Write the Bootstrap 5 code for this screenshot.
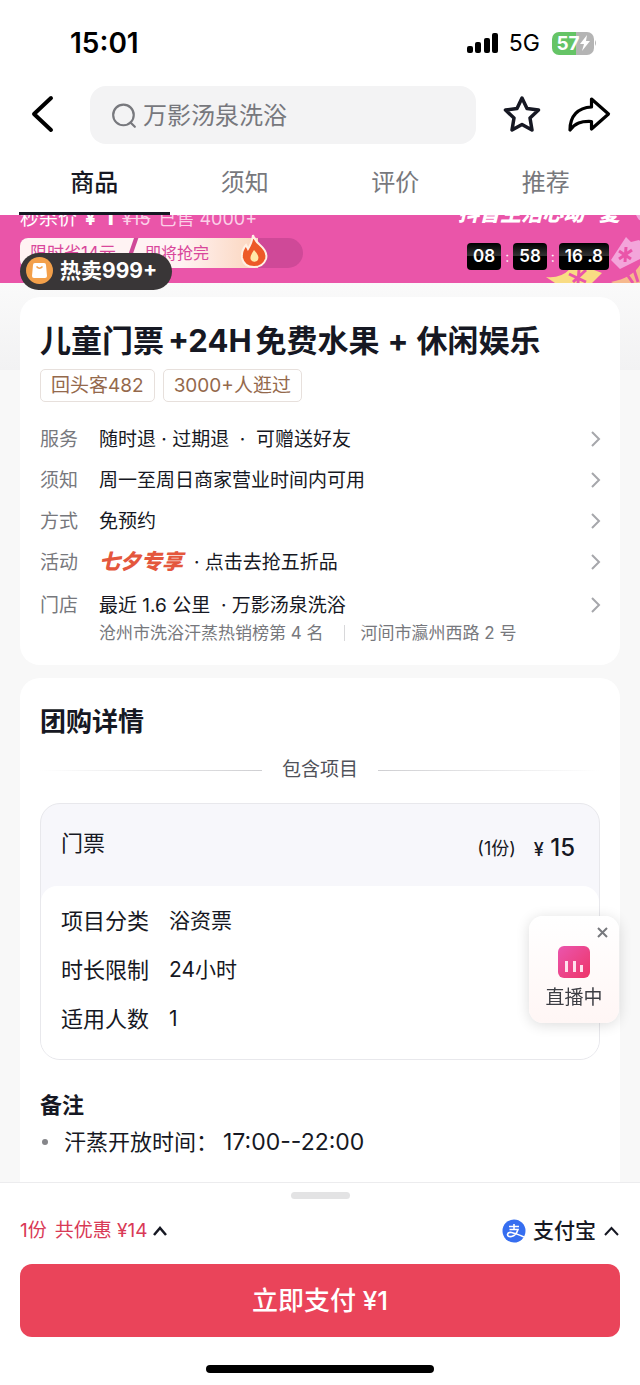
<!DOCTYPE html>
<html lang="zh-CN">
<head>
<meta charset="utf-8">
<meta name="viewport" content="width=device-width, initial-scale=1">
<title>儿童门票+24H免费水果+休闲娱乐</title>
<link href="https://cdn.jsdelivr.net/npm/bootstrap@5.3.0/dist/css/bootstrap.min.css" rel="stylesheet">
<script src="https://cdn.jsdelivr.net/npm/bootstrap@5.3.0/dist/js/bootstrap.bundle.min.js" defer></script>
<style>
  body { font-family: Inter, "Noto Sans CJK SC", sans-serif; font-size: 19px; line-height: 30px; color: #161823; background: #f8f8f8; }
  svg { display: block; flex: none; }
  a { color: inherit; text-decoration: none; }
  .page-head { z-index: 10; }
  .status { height: 86px; padding: 0 43px 0 70px; color: #000; }
  .clock { font-size: 28px; font-weight: 600; }
  .network { margin: 0 12px 0 10px; font-size: 23px; }
  .battery { width: 42px; height: 23px; border-radius: 7px; background: linear-gradient(90deg, #65c466 57%, #b4b4b4 57%); color: #fff; font-size: 19px; font-weight: 700; line-height: 23px; }
  .tools { padding: 0 29px; }
  .plain { border: 0; padding: 0; background: none; color: inherit; }
  .search { height: 58px; margin: 0 27px 0 32px; padding: 2px 21px 0; gap: 6px; border-radius: 16px; background: #f3f3f4; color: #77787d; }
  .search input { width: 100%; min-width: 0; border: 0; outline: 0; padding: 0; background: none; font-size: 24px; color: inherit; }
  .search input::placeholder { color: #77787d; opacity: 1; }
  .tabs { padding: 0 19px; font-size: 24px; color: #77787d; }
  .tabs a { height: 71px; line-height: 78px; border-bottom: 3px solid transparent; }
  .tabs a.active { color: #161823; font-weight: 500; border-color: #161823; }
  .promo { height: 68px; padding: 0 20px; background: #ea55a9; color: #fff; }
  .promo-inner { margin-top: -11px; }
  .price { gap: 8px; line-height: 26px; white-space: nowrap; }
  .price .old { font-size: 18px; color: #fbd0e8; }
  .price .now { font-size: 24px; line-height: 26px; }
  .saving { width: 283px; height: 30px; margin-top: 6px; border-radius: 8px 15px 15px 8px; background: #cf4998; color: #d9479b; font-size: 17px; line-height: 30px; }
  .saving-a { width: 114px; padding-left: 10px; border-radius: 8px 0 0 8px; background: #fff3f3; clip-path: polygon(0 0, 100% 0, 91% 100%, 0 100%); }
  .saving-b { width: 130px; margin-left: -6px; padding-left: 17px; background: linear-gradient(90deg, #fff3f3 40%, #fbd5bd); clip-path: polygon(8% 0, 100% 0, 100% 100%, 0 100%); font-size: 16px; }
  .flame { left: 219px; top: -5px; }
  .slogan { gap: 15px; font-size: 21px; font-weight: 900; font-style: italic; line-height: 20px; }
  .timer { margin-top: 19px; margin-right: 11px; gap: 4px; font-size: 17px; line-height: 27px; }
  .timer b { min-width: 33px; padding: 0 6px; border-radius: 4px; background: linear-gradient(#000, #333 48%, #000 50%); font-weight: 600; text-align: center; white-space: pre; }
  .timer span { width: 4px; font-size: 14px; }
  .coupons { right: 0; bottom: 0; }
  .hot { left: 20px; top: 38px; height: 37px; padding: 0 15px 2px 6px; gap: 7px; border-radius: 19px; background: #393637; color: #fff; font-weight: 700; font-size: 21px; z-index: 5; }
  .content { padding: 14px 20px 0; gap: 13px; background: linear-gradient(#fafafa, #f2f2f3 87px, #f8f8f8 87px); }
  .panel { padding: 24px 20px 20px; border-radius: 20px; background: #fff; }
  .deal-title { margin: 0; font-size: 31px; font-weight: 700; line-height: 40px; }
  .chip { padding: 0 10px; border: 1px solid #e7e0dc; border-radius: 5px; color: #94694c; line-height: 31px; }
  .facts { margin-top: 17px; }
  .facts a { margin-right: -3px; padding: 6px 0 5px; }
  .facts a:last-child { padding: 8px 0 0; }
  .fact-name { width: 59px; flex: none; color: #77787d; }
  .where { font-size: 17px; line-height: 24px; color: #77787d; }
  .where i { width: 1px; height: 16px; margin: 0 16px 0 20px; background: #d8d8da; }
  .gala { margin-right: 11px; color: #e4573d; font-size: 21px; font-weight: 900; font-style: italic; line-height: 28px; }
  .sec-title { margin: 0; font-size: 26px; font-weight: 600; line-height: 40px; }
  .divider { margin: 14px 0 19px; gap: 20px; line-height: 28px; color: #50525a; }
  .divider::before, .divider::after { content: ""; flex: 1; height: 1px; background: linear-gradient(90deg, #fff, #cfcfd2); }
  .divider::after { background: linear-gradient(270deg, #fff, #cfcfd2); }
  .ticket { border: 1px solid #e8e8ec; border-radius: 20px; background: #f7f7fb; overflow: hidden; }
  .ticket-head { height: 82px; padding: 0 24px 4px 20px; font-size: 22px; }
  .ticket-head .qty { margin-right: 18px; padding-top: 12px; font-size: 18px; }
  .ticket-head .amount { padding-top: 12px; font-size: 24px; }
  .ticket-head .yen { font-size: 18px; }
  .ticket-body { padding: 10px 20px 16px; border-radius: 16px 16px 0 0; background: #fff; }
  .ticket-body table { font-size: 21px; }
  .ticket-body th { width: 108px; font-size: 22px; font-weight: 400; }
  .ticket-body th, .ticket-body td { height: 49px; padding: 0; }
  .note-title { margin: 28px 0 0; font-size: 22px; font-weight: 600; line-height: 34px; }
  .notes { font-size: 22px; line-height: 40px; }
  .notes li::before { content: ""; width: 6px; height: 6px; margin: 0 16px 0 2px; border-radius: 50%; background: #85868a; }
  .notes time { margin-left: 5px; font-size: 23px; }
  .live { right: 21px; bottom: 362px; width: 90px; height: 107px; padding-top: 30px; gap: 5px; border-radius: 14px; background: linear-gradient(#fff, #fff6f5); box-shadow: 0 2px 14px rgba(0, 0, 0, .14); color: #3d3e44; z-index: 20; }
  .live .shut { right: 11px; top: 11px; }
  .paybar { padding: 9px 20px 13px; border-top: 1px solid #ececee; background: #fff; z-index: 15; }
  .grip { width: 59px; height: 7px; border-radius: 4px; background: #e3e3e4; }
  .payrow { padding: 17px 0 18px; }
  .discount { color: #d93a56; gap: 3px; }
  .discount b { margin-right: 5px; font-weight: 400; }
  .method { font-size: 21px; font-weight: 500; gap: 7px; }
  .pay { height: 73px; border-radius: 12px; background: #ea445a; color: #fff; font-size: 26px; font-weight: 500; }
  .pay:hover { background: #d93a50; color: #fff; }
  .home { width: 38%; height: 8px; margin-top: 28px; border-radius: 4px; background: #000; }
</style>
</head>
<body class="d-flex flex-column min-vh-100">
<header class="page-head sticky-top bg-white">
  <div class="status d-flex align-items-center justify-content-between">
    <span class="clock">15:01</span>
    <div class="d-flex align-items-center">
      <svg width="33" height="21" viewBox="0 0 33 21"><rect x="1" y="13" width="6" height="7" rx="2"/><rect x="9" y="9" width="6" height="11" rx="2"/><rect x="18" y="5" width="6" height="15" rx="2"/><rect x="26" y="0" width="6" height="20" rx="2"/></svg>
      <span class="network">5G</span>
      <span class="battery d-flex align-items-center justify-content-center">57<svg width="10" height="18" viewBox="0 0 10 18"><path d="M7 1 0 10h4l-2 7 8-10H6z" fill="#fff"/></svg></span>
      <svg width="3" height="8"><path d="M1 1q2 3 0 6z" fill="#b4b4b4"/></svg>
    </div>
  </div>
  <div class="tools d-flex align-items-center">
    <button class="plain" aria-label="返回"><svg width="29" height="40" viewBox="0 0 29 40"><path d="M22 3 5 19l17 16" fill="none" stroke="#000" stroke-width="4" stroke-linecap="round" stroke-linejoin="round"/></svg></button>
    <label class="search d-flex align-items-center flex-grow-1">
      <svg width="26" height="26" viewBox="0 0 24 24" fill="none" stroke="#77787d" stroke-width="2"><circle cx="11.500" cy="11" r="9.500"/><path d="m18 18 4 4" stroke-linecap="round"/></svg>
      <input type="search" placeholder="万影汤泉洗浴" aria-label="搜索">
    </label>
    <button class="plain me-4" aria-label="收藏"><svg width="40" height="40" viewBox="0 0 40 40"><path d="m19 3 5 10.500 11.500 1.500-8.500 8 2 12-10-5.500L9 35l2-12-8.500-8L14 13.500z" fill="none" stroke="#161823" stroke-width="3.500" stroke-linejoin="round"/></svg></button>
    <button class="plain" aria-label="分享"><svg width="44" height="40" viewBox="0 0 44 40"><path d="M24.500 4 41.500 19l-17 15V26.500C14 26 8 28 3 35 3 21 11 12.500 24.500 12z" fill="none" stroke="#000" stroke-width="3.200" stroke-linejoin="round"/></svg></button>
  </div>
  <nav class="tabs d-flex text-center">
    <a class="col active" href="#goods">商品</a>
    <a class="col" href="#notice">须知</a>
    <a class="col" href="#reviews">评价</a>
    <a class="col" href="#more">推荐</a>
  </nav>
</header>

<section class="position-relative">
  <div class="promo position-relative overflow-hidden">
    <svg class="coupons position-absolute" width="98" height="68" viewBox="0 0 98 68">
      <path d="M4 62q14 2 24-8l24 1 8 3-10 10H13z" fill="#f9dc83"/>
      <path d="m27 59 17 8m0-12-13 12m6-12-1 13" stroke="#ea55a9" stroke-width="3"/>
      <path d="m84 22 5 5 8-2 1 1v18L78 54l-9-9z" fill="#f3a5da"/>
      <path d="m77 36 12 8m1-9-13 9m7-12-1 15" stroke="#ea55a9" stroke-width="3"/>
      <path d="M69 67q21-4 29-17v18H71z" fill="#f6b98d"/>
      <path d="m84 58 7 10m1-13 4 12" stroke="#ea55a9" stroke-width="3"/>
      <path d="M94 0q3 6 4 5V0z" fill="#f3a5da"/>
    </svg>
    <div class="promo-inner d-flex justify-content-between position-relative">
      <div>
        <div class="price d-flex align-items-baseline"><span>秒杀价</span><b>¥</b><b class="now">1</b><s class="old">¥15</s><span class="old">已售 4000+</span></div>
        <div class="saving d-flex position-relative">
          <div class="saving-a">限时省14元</div><div class="saving-b">即将抢完</div>
          <svg class="flame position-absolute" width="30" height="36" viewBox="0 0 30 36"><path d="M14 2q2 6 7 10 8 7 6 14-3 8-12 8-10 0-12-9-1-7 4-13l2 4q4-6 5-14z" fill="#ed5a28" stroke="#fff0e4" stroke-width="2"/><path d="M15 17q7 7 3 11-4 2-6-1-2-3 3-10z" fill="#ffe9a8"/></svg>
        </div>
      </div>
      <div class="d-flex flex-column align-items-end">
        <div class="slogan d-flex"><span>抖音生活心动</span><span>夏</span></div>
        <div class="timer d-flex"><b>08</b><span>:</span><b>58</b><span>:</span><b>16 .8</b></div>
      </div>
    </div>
  </div>
  <div class="hot position-absolute d-flex align-items-center">
    <svg width="27" height="27" viewBox="0 0 27 27"><circle cx="13.500" cy="13.500" r="13.500" fill="#f3a04a"/><path d="M9 6h9q2 0 2 2l1 11q0 2-2 2H8q-2 0-2-2L7 8q0-2 2-2z" fill="#fff"/><path d="M10.500 9.500q3 3.500 6 0" fill="none" stroke="#f3a04a" stroke-width="1.500"/></svg>热卖999+
  </div>
</section>

<main class="content d-flex flex-column flex-grow-1">
  <section class="panel" id="goods">
    <h1 class="deal-title">儿童门票<span class="mx-1">+24H</span>免费水果<span class="mx-2">+</span>休闲娱乐</h1>
    <div class="d-flex gap-2 mt-2"><span class="chip">回头客482</span><span class="chip">3000+人逛过</span></div>
    <div class="facts">
      <a class="d-flex" href="#service"><span class="fact-name">服务</span><span class="flex-grow-1">随时退 · 过期退&nbsp; · &nbsp;可赠送好友</span><svg width="14" height="30" viewBox="0 0 14 30"><path d="m3 7 7 7-7 7" fill="none" stroke="#a6a7ab" stroke-width="2"/></svg></a>
      <a class="d-flex" href="#notice"><span class="fact-name">须知</span><span class="flex-grow-1">周一至周日商家营业时间内可用</span><svg width="14" height="30" viewBox="0 0 14 30"><path d="m3 7 7 7-7 7" fill="none" stroke="#a6a7ab" stroke-width="2"/></svg></a>
      <a class="d-flex" href="#booking"><span class="fact-name">方式</span><span class="flex-grow-1">免预约</span><svg width="14" height="30" viewBox="0 0 14 30"><path d="m3 7 7 7-7 7" fill="none" stroke="#a6a7ab" stroke-width="2"/></svg></a>
      <a class="d-flex" href="#activity"><span class="fact-name">活动</span><span class="flex-grow-1"><span class="gala">七夕专享</span>· 点击去抢五折品</span><svg width="14" height="30" viewBox="0 0 14 30"><path d="m3 7 7 7-7 7" fill="none" stroke="#a6a7ab" stroke-width="2"/></svg></a>
      <a class="d-flex" href="#shop"><span class="fact-name">门店</span><span class="flex-grow-1">最近 1.6 公里&nbsp; · 万影汤泉洗浴<span class="where d-flex align-items-center">沧州市洗浴汗蒸热销榜第 4 名<i></i>河间市瀛州西路 2 号</span></span><svg width="14" height="30" viewBox="0 0 14 30"><path d="m3 7 7 7-7 7" fill="none" stroke="#a6a7ab" stroke-width="2"/></svg></a>
    </div>
  </section>

  <section class="panel flex-grow-1 rounded-bottom-0">
    <h2 class="sec-title">团购详情</h2>
    <div class="divider d-flex align-items-center">包含项目</div>
    <div class="ticket">
      <div class="ticket-head d-flex align-items-center"><span class="me-auto">门票</span><span class="qty">(1份)</span><span class="amount fw-medium"><span class="yen">¥</span> 15</span></div>
      <div class="ticket-body">
        <table>
          <tr><th scope="row">项目分类</th><td>浴资票</td></tr>
          <tr><th scope="row">时长限制</th><td>24小时</td></tr>
          <tr><th scope="row">适用人数</th><td>1</td></tr>
        </table>
      </div>
    </div>
    <h3 class="note-title">备注</h3>
    <ul class="notes list-unstyled mb-0"><li class="d-flex align-items-center">汗蒸开放时间：<time>17:00--22:00</time></li></ul>
  </section>
</main>

<aside class="live position-fixed d-flex flex-column align-items-center">
  <button class="plain shut position-absolute" aria-label="关闭"><svg width="11" height="11" viewBox="0 0 11 11"><path d="m1 1 9 9m0-9-9 9" stroke="#77787d" stroke-width="2"/></svg></button>
  <svg width="32" height="32" viewBox="0 0 32 32"><defs><linearGradient id="g" x2="1" y2="1"><stop stop-color="#ea55ae"/><stop offset="1" stop-color="#ee3568"/></linearGradient></defs><rect width="32" height="32" rx="6" fill="url(#g)"/><path d="M8.500 15v11m8-11v11m7-7v7" stroke="#ffe0ec" stroke-width="3"/></svg>
  <span>直播中</span>
</aside>

<footer class="paybar sticky-bottom">
  <div class="grip mx-auto"></div>
  <div class="payrow d-flex justify-content-between align-items-center">
    <button class="plain discount d-flex align-items-center"><b>1份</b>共优惠 ¥14<svg width="18" height="12" viewBox="0 0 18 12"><path d="m3 10 6-7 6 7" fill="none" stroke="#161823" stroke-width="2.500"/></svg></button>
    <button class="plain method d-flex align-items-center"><svg width="24" height="24" viewBox="0 0 24 24"><circle cx="12" cy="12" r="11.500" fill="#366ef0"/><path d="M7 7.500h10M12 5v5.500M7.500 10.500h8.500q-2 6-6.500 7-4 .5-4-2 .5-2.500 4-2 4.500 1 12.500 4.500" fill="none" stroke="#fff" stroke-width="1.600"/></svg>支付宝<svg width="17" height="12" viewBox="0 0 17 12"><path d="m2 10 6.500-7 6.500 7" fill="none" stroke="#161823" stroke-width="2"/></svg></button>
  </div>
  <button class="btn pay w-100">立即支付 ¥1</button>
  <div class="home mx-auto mb-1"></div>
</footer>
</body>
</html>
